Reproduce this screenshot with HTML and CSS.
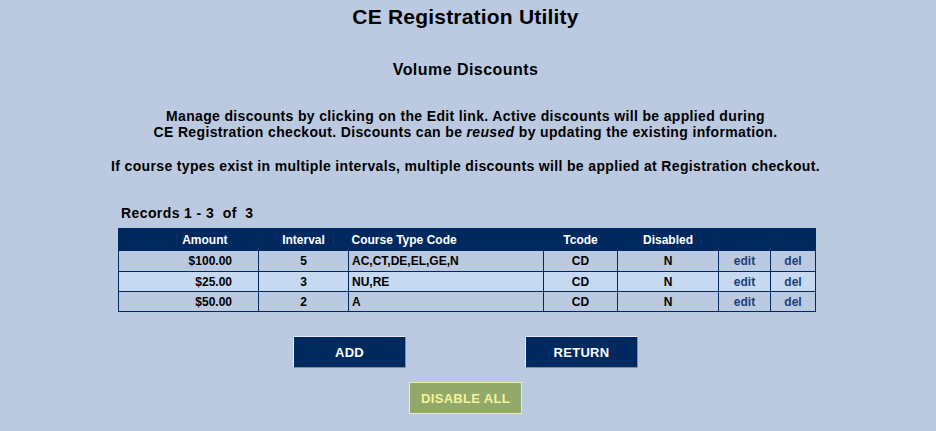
FILE: index.html
```html
<!DOCTYPE html>
<html>
<head>
<meta charset="utf-8">
<link rel="stylesheet" href="styles.css">
</head>
<body>
<div class="page">
  <h1 class="title">CE Registration Utility</h1>
  <h2 class="subtitle">Volume Discounts</h2>
  <p class="intro">Manage discounts by clicking on the <b class="em">Edit</b> link. Active discounts will be applied during<br>CE Registration checkout. Discounts can be <i>reused</i> by updating the existing information.</p>
  <p class="intro note">If course types exist in multiple intervals, multiple discounts will be applied at Registration checkout.</p>
  <div class="records">Records 1 - 3&nbsp; of&nbsp; 3</div>
  <table class="grid">
    <colgroup>
      <col class="w-amt"><col class="w-int"><col class="w-code"><col class="w-tc"><col class="w-dis"><col class="w-edit"><col class="w-del">
    </colgroup>
    <thead>
      <tr>
        <th class="c-amt">Amount</th>
        <th class="c-int">Interval</th>
        <th class="c-code">Course Type Code</th>
        <th class="c-tc">Tcode</th>
        <th class="c-dis">Disabled</th>
        <th class="c-edit"></th>
        <th class="c-del"></th>
      </tr>
    </thead>
    <tbody>
      <tr class="first">
        <td class="c-amt">$100.00</td><td class="c-int">5</td><td class="c-code">AC,CT,DE,EL,GE,N</td><td class="c-tc">CD</td><td class="c-dis">N</td><td class="c-edit"><a href="#">edit</a></td><td class="c-del"><a href="#">del</a></td>
      </tr>
      <tr class="alt">
        <td class="c-amt">$25.00</td><td class="c-int">3</td><td class="c-code">NU,RE</td><td class="c-tc">CD</td><td class="c-dis">N</td><td class="c-edit"><a href="#">edit</a></td><td class="c-del"><a href="#">del</a></td>
      </tr>
      <tr>
        <td class="c-amt">$50.00</td><td class="c-int">2</td><td class="c-code">A</td><td class="c-tc">CD</td><td class="c-dis">N</td><td class="c-edit"><a href="#">edit</a></td><td class="c-del"><a href="#">del</a></td>
      </tr>
    </tbody>
  </table>
  <div class="actions">
    <button class="btn">ADD</button>
    <button class="btn">RETURN</button>
  </div>
  <div class="actions second">
    <button class="btn olive">DISABLE ALL</button>
  </div>
</div>
</body>
</html>
```

FILE: styles.css
```css
html, body {
  margin: 0;
  padding: 0;
  background: #bbcae1;
}
.page {
  width: 931px;
  height: 431px;
  font-family: "Liberation Sans", Arial, sans-serif;
  color: #000;
}
.title {
  margin: 0;
  padding-top: 5px;
  font-size: 21px;
  line-height: 24px;
  letter-spacing: 0.2px;
  text-align: center;
  font-weight: bold;
}
.subtitle {
  margin: 0;
  padding-top: 32px;
  font-size: 16px;
  line-height: 18px;
  letter-spacing: 0.45px;
  text-align: center;
  font-weight: bold;
}
.intro {
  margin: 0;
  padding-top: 29px;
  font-size: 14px;
  line-height: 16px;
  letter-spacing: 0.35px;
  text-align: center;
  font-weight: bold;
}
.intro.note {
  padding-top: 18px;
}
.records {
  margin: 31px 0 0 121px;
  font-size: 14px;
  line-height: 16px;
  letter-spacing: 0.4px;
  font-weight: bold;
}
.grid {
  margin: 7px 0 0 118px;
  width: 697px;
  table-layout: fixed;
  border-collapse: collapse;
  font-size: 12px;
  font-weight: bold;
  border: 1px solid #002a5f;
}
.w-amt { width: 140px; }
.w-int { width: 90px; }
.w-code { width: 195px; }
.w-tc { width: 74px; }
.w-dis { width: 101px; }
.w-edit { width: 52px; }
.w-del { width: 45px; }
.grid th {
  background: #002a5f;
  color: #fff;
  height: 21px;
  padding: 0;
  font-weight: bold;
}
.grid td {
  height: 19px;
  padding: 0;
  border: 1px solid #002a5f;
  background: #bbcae1;
}
.grid tr.first td {
  height: 20px;
}
.grid tr.alt td {
  background: #c6d9f1;
}
.grid .c-amt { text-align: right; padding-right: 26px; }
.grid th.c-amt { padding-right: 31px; }
.grid .c-int { text-align: center; }
.grid .c-code { text-align: left; padding-left: 3px; }
.grid .c-tc { text-align: center; }
.grid .c-dis { text-align: center; }
.grid .c-edit { text-align: center; }
.grid .c-del { text-align: center; }
.grid a {
  color: #1c3f7a;
  text-decoration: none;
  font-weight: bold;
}
.actions {
  display: flex;
  justify-content: center;
  gap: 119px;
  margin-top: 24px;
}
.actions.second {
  margin-top: 14px;
}
.btn {
  box-sizing: border-box;
  width: 113px;
  height: 32px;
  background: #002a5f;
  color: #fff;
  font-family: "Liberation Sans", Arial, sans-serif;
  font-size: 13px;
  letter-spacing: 0.3px;
  font-weight: bold;
  border: 1px solid;
  border-color: #e8ecf4 #8a8f99 #8a8f99 #e8ecf4;
  padding: 0;
}
.btn.olive {
  background: #93a96b;
  color: #f4f49a;
  border: 1px solid #eef09a;
}
```
